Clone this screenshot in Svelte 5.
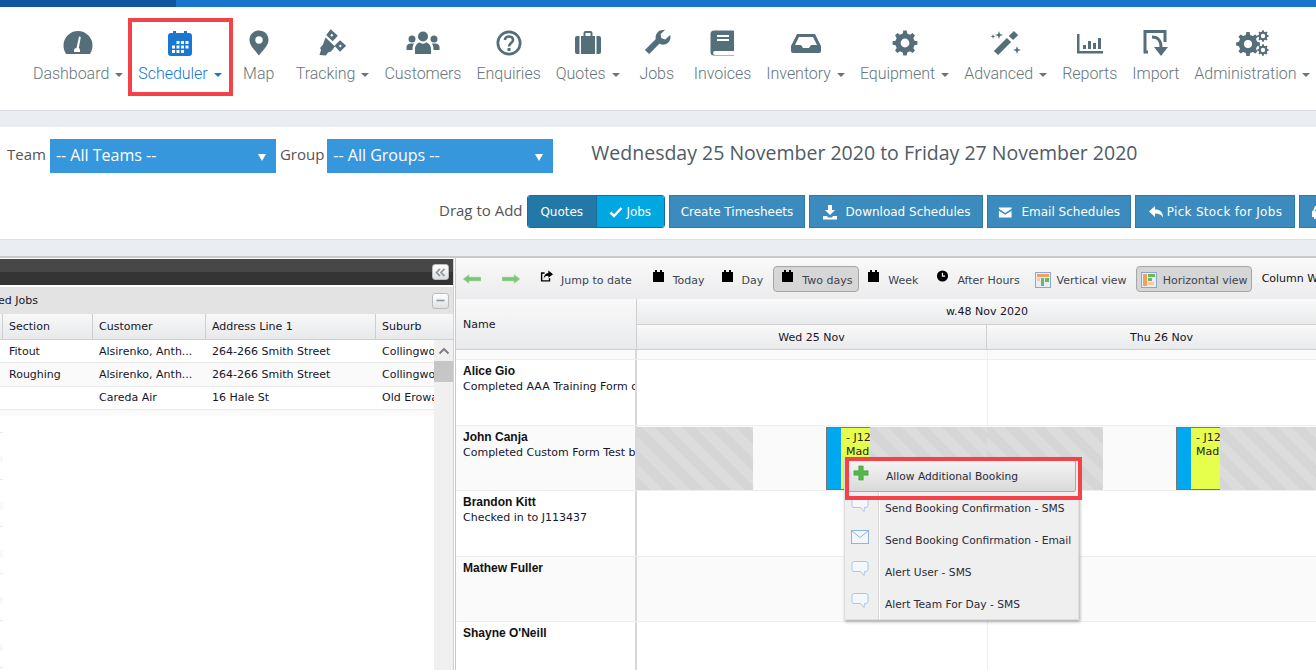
<script>
  // gear outline as one path, with a round hole in the middle
  function gear(cx, cy, r, hole, teeth = 8) {
    let d = '';
    const step = (Math.PI * 2) / teeth;
    for (let i = 0; i < teeth; i++) {
      const a = i * step - Math.PI / 2;
      const pts = [
        [r * 0.78, a - step * 0.3],
        [r, a - step * 0.17],
        [r, a + step * 0.17],
        [r * 0.78, a + step * 0.3]
      ];
      for (const [rad, t] of pts) {
        d += `${d ? 'L' : 'M'}${(cx + rad * Math.cos(t)).toFixed(2)} ${(cy + rad * Math.sin(t)).toFixed(2)}`;
      }
    }
    d += `zM${cx - hole} ${cy}a${hole} ${hole} 0 1 0 ${hole * 2} 0a${hole} ${hole} 0 1 0 ${-hole * 2} 0z`;
    return d;
  }

  const icons = {
    dashboard: {
      d: 'M17 1A14.5 14.5 0 0 0 2.5 15.5c0 3 1 6 2.5 8.5h24c1.500-2.500 2.500-5.500 2.500-8.500A14.500 14.500 0 0 0 17 1zM15.500 18l2.500-11.500 1.800.4-2 11.100c.8.500 1.200 1.100 1.200 2V22h-6v-2c0-1 1-2 2.500-2z'
    },
    calendar: {
      d: 'M8 3h2V1h3v2h8V1h3v2h2a3 3 0 0 1 3 3v17a3 3 0 0 1-3 3H8a3 3 0 0 1-3-3V6a3 3 0 0 1 3-3zM13.500 11h3v3h-3zM18 11h3v3h-3zM22.500 11h3v3h-3zM9 15.500h3v3H9zM13.500 15.500h3v3h-3zM18 15.500h3v3h-3zM22.500 15.500h3v3h-3zM9 20h3v3H9zM13.500 20h3v3h-3zM18 20h3v3h-3z'
    },
    marker: {
      d: 'M17 .5C11.500.5 7.500 4.500 7.500 10c0 6 6.500 11 9.500 15.500 3-4.500 9.500-9.500 9.500-15.500 0-5.500-4-9.500-9.500-9.500zM17 6.300a3.700 3.700 0 1 1 0 7.400 3.700 3.700 0 0 1 0-7.400z'
    },
    satellite: {
      d: 'M14.700-.8l7.100 6.500-5.100 5.500-6.500-6.200zM15.800 3.800l-1.500 1.500 1.500 1.500 1.500-1.500zM24 10.200l6.200 5.500-6.200 6.100-5.500-6.100zM24.300 14.500l-1.500 1.500 1.500 1.500 1.500-1.500zM9.500 7.500l9.500 9-4 5-3 1-2 3-6.500-.5 1.500-5-1-2 3-3.500z'
    },
    users: {
      d: 'M17 1.500a5 5 0 1 1 0 10 5 5 0 0 1 0-10zM6 5.500a3.500 3.500 0 1 1 0 7 3.500 3.500 0 0 1 0-7zM28 5.500a3.500 3.500 0 1 1 0 7 3.500 3.500 0 0 1 0-7zM9 24v-5c0-4 3-6.500 5-6.500 1 .8 2 1.200 3 1.200s2-.4 3-1.200c2 0 5 2.500 5 6.500v5zM.5 20v-3c0-2 2-3.500 4-3.500h3.500c-1 1.500-1.500 3-1.500 6.500zM33.500 20v-3c0-2-2-3.500-4-3.500H26c1 1.500 1.500 3 1.500 6.500zM0 0z'
    },
    question: {
      d: 'M17 .5a12.500 12.500 0 1 1 0 25 12.500 12.500 0 0 1 0-25zM17 3.200a9.800 9.800 0 1 0 0 19.600 9.800 9.800 0 0 0 0-19.600zM15.500 18h3v3h-3z',
      s: 'M13 10c0-2.500 2-3.500 4-3.500s4 1.200 4 3.500c0 3-4 3-4 6.500',
      w: 2.6
    },
    suitcase: {
      d: 'M6 6h2.500v18H6a2 2 0 0 1-2-2V8a2 2 0 0 1 2-2zM10 6h2.500V3a2 2 0 0 1 2-2h5a2 2 0 0 1 2 2v3H24v18H10zM14.500 3v3h5V3zM25.500 6H28a2 2 0 0 1 2 2v14a2 2 0 0 1-2 2h-2.500z'
    },
    wrench: {
      d: 'M23 0a7.500 7.500 0 0 0-7 10l4 4a7.500 7.500 0 0 0 10.500-7.500l-.3-1.500-5 4.500-4-1.500-.5-4 4.500-4.300z',
      s: 'M7 22L19 10',
      w: 6
    },
    book: {
      d: 'M8 .5h19a1 1 0 0 1 1 1V21H9a2 2 0 0 0 0 4h19v.5H8a3.500 3.500 0 0 1-3.500-3.500V4A3.500 3.500 0 0 1 8 .5zM11 5h12v2H11zM11 9h12v2H11z'
    },
    inbox: {
      d: 'M8 4h18l6 12v5a2 2 0 0 1-2 2H4a2 2 0 0 1-2-2v-5zM10 7l-4 8h6l2 3h6l2-3h6l-4-8z'
    },
    cog: { d: gear(17, 13, 12.5, 4.4) },
    wand: {
      d: 'M10 1l1 3 3 1-3 1-1 3-1-3-3-1 3-1zM4 4l.6 1.800 1.800.6-1.800.6L4 9l-.6-2-1.800-.6 1.800-.6zM28 16l1 3 3 1-3 1-1 3-1-3-3-1 3-1z',
      s: 'M7 23L20 10M22 8l5-5',
      w: 6
    },
    chart: {
      d: 'M4 4h2.500v17H30v2.500H4zM10 15h3v4h-3zM15 11h3v8h-3zM20 13h3v6h-3zM25 8h3v11h-3z'
    },
    importer: {
      d: 'M15 17h14l-7 9z',
      s: 'M9 22H6V1.500h20V12M13 7c7 0 9 4 9 11',
      w: 3
    },
    cogs: { d: gear(13, 14, 12, 4) + gear(28, 6, 5.7, 2.2) + gear(28, 20, 5.7, 2.2) }
  };

  const navItems = [
    { label: 'Dashboard', icon: 'dashboard', caret: true },
    { label: 'Scheduler', icon: 'calendar', caret: true, active: true },
    { label: 'Map', icon: 'marker' },
    { label: 'Tracking', icon: 'satellite', caret: true },
    { label: 'Customers', icon: 'users' },
    { label: 'Enquiries', icon: 'question' },
    { label: 'Quotes', icon: 'suitcase', caret: true },
    { label: 'Jobs', icon: 'wrench' },
    { label: 'Invoices', icon: 'book' },
    { label: 'Inventory', icon: 'inbox', caret: true },
    { label: 'Equipment', icon: 'cog', caret: true },
    { label: 'Advanced', icon: 'wand', caret: true },
    { label: 'Reports', icon: 'chart' },
    { label: 'Import', icon: 'importer' },
    { label: 'Administration', icon: 'cogs', caret: true }
  ];

  const jobs = [
    { section: 'Fitout', customer: 'Alsirenko, Anth...', address: '264-266 Smith Street', suburb: 'Collingwood' },
    { section: 'Roughing', customer: 'Alsirenko, Anth...', address: '264-266 Smith Street', suburb: 'Collingwood' },
    { section: '', customer: 'Careda Air', address: '16 Hale St', suburb: 'Old Erowal Bay' }
  ];

  const people = [
    { name: 'Alice Gio', note: 'Completed AAA Training Form on' },
    { name: 'John Canja', note: 'Completed Custom Form Test by', booked: true },
    { name: 'Brandon Kitt', note: 'Checked in to J113437' },
    { name: 'Mathew Fuller', note: '' },
    { name: "Shayne O'Neill", note: '' }
  ];

  const menu = [
    { label: 'Allow Additional Booking', icon: 'plus', active: true },
    { label: 'Send Booking Confirmation - SMS', icon: 'bubble' },
    { label: 'Send Booking Confirmation - Email', icon: 'mail' },
    { label: 'Alert User - SMS', icon: 'bubble' },
    { label: 'Alert Team For Day - SMS', icon: 'bubble' }
  ];
</script>

{#snippet cal()}
  <svg class="tool-icon" viewBox="0 0 13 14"><path d="M1 3h2V1h2v2h3V1h2v2h2v10H1z" /></svg>
{/snippet}

{#snippet booking()}
  <div class="booking">
    <div class="booking-side"></div>
    <div class="booking-text">- J1234<br />Madison</div>
  </div>
{/snippet}

<div class="page">
  <div class="topbar"><div class="topbar-dark"></div></div>

  <nav class="nav">
    {#each navItems as item}
      <div class="nav-item" class:active={item.active}>
        <svg class="nav-icon" viewBox="0 0 34 26">
          <path d={icons[item.icon].d} fill-rule="evenodd" />
          {#if icons[item.icon].s}
            <path class="nav-stroke" d={icons[item.icon].s} stroke-width={icons[item.icon].w} />
          {/if}
        </svg>
        <span class="nav-label">{item.label}{#if item.caret}<i class="caret"></i>{/if}</span>
      </div>
    {/each}
  </nav>

  <section class="filters">
    <div class="filter-row">
      <span class="filter-label">Team</span>
      <div class="select team">-- All Teams --<i class="select-arrow"></i></div>
      <span class="filter-label">Group</span>
      <div class="select group">-- All Groups --<i class="select-arrow"></i></div>
      <h1 class="range">Wednesday 25 November 2020 to Friday 27 November 2020</h1>
    </div>
    <div class="action-row">
      <span class="filter-label drag">Drag to Add</span>
      <div class="toggle">
        <span class="toggle-off">Quotes</span>
        <span class="toggle-on">
          <svg class="btn-icon check" viewBox="0 0 14 14"><path d="M1.500 7.500l3.500 3.500 7.500-8" /></svg>Jobs
        </span>
      </div>
      <button class="btn create">Create Timesheets</button>
      <button class="btn download">
        <svg class="btn-icon solid" viewBox="0 0 16 16"><path d="M6 1h4v5h3l-5 5-5-5h3zM1 12h4l1 1.500h4l1-1.500h4v3.500H1z" /></svg>Download Schedules
      </button>
      <button class="btn email">
        <svg class="btn-icon solid" viewBox="0 0 16 16"><path d="M1 3h14v1.500L8 9 1 4.500zM1 6.500L8 11l7-4.500V14H1z" /></svg>Email Schedules
      </button>
      <button class="btn pick">
        <svg class="btn-icon solid" viewBox="0 0 16 16"><path d="M7 2v3.500c5 0 8 2.500 8 8-1.500-3-4-4-8-4V13L1 7.500z" /></svg>Pick Stock for Jobs
      </button>
      <button class="btn">
        <svg class="btn-icon solid" viewBox="0 0 16 16"><path d="M3 7l2-5h6l2 5h1v6h-2v2h-2v-2H6v2H4v-2H2V7zM5 7h6L9.800 4H6.200z" fill-rule="evenodd" /></svg>Unpick
      </button>
    </div>
  </section>

  <main class="workspace">
    <aside class="jobs">
      <div class="jobs-head">
        <button class="mini-btn" aria-label="Collapse">
          <svg viewBox="0 0 12 10"><path d="M5.500 1L1.500 5l4 4M10.500 1l-4 4 4 4" /></svg>
        </button>
      </div>
      <div class="jobs-title">
        <span class="jobs-title-text"><span>Unscheduled Jobs</span></span>
        <button class="mini-btn" aria-label="Minimise">
          <svg viewBox="0 0 12 10"><path d="M1.500 5h9" /></svg>
        </button>
      </div>
      <div class="grid-row grid-head">
        <span>Section</span><span>Customer</span><span>Address Line 1</span><span>Suburb</span>
      </div>
      <div class="grid-body">
        <div class="grid-rows">
          {#each jobs as job, i}
            <div class="grid-row" class:alt={i % 2 === 1}>
              <span>{job.section}</span><span>{job.customer}</span><span>{job.address}</span><span>{job.suburb}</span>
            </div>
          {/each}
          <div class="grid-band"></div>
          <div class="row-stubs"></div>
        </div>
        <div class="scrollbar">
          <svg viewBox="0 0 12 8"><path d="M1.500 6.500L6 2l4.500 4.500" /></svg>
          <div class="scroll-thumb"></div>
        </div>
      </div>
    </aside>

    <section class="schedule">
      <div class="tools">
        <svg class="arrow" viewBox="0 0 18 10"><path d="M0 5l6-4.500V3h12v4H6v2.500z" /></svg>
        <svg class="arrow arrow-right" viewBox="0 0 18 10"><path d="M18 5l-6-4.500V3H0v4h12v2.500z" /></svg>
        <span class="tool jump">
          <svg class="tool-icon" viewBox="0 0 14 14"><path d="M9 1l5 4-5 4V6.800C6.500 6.800 5 7.500 4 10c0-4 2-6 5-6.300zM1 3h4v1.500H2.500v7h7V9.500H11V13H1z" /></svg>Jump to date
        </span>
        <span class="tool today">{@render cal()}Today</span>
        <span class="tool day">{@render cal()}Day</span>
        <span class="tool pressed two">{@render cal()}Two days</span>
        <span class="tool week">{@render cal()}Week</span>
        <span class="tool after">
          <svg class="tool-icon" viewBox="0 0 14 14"><path fill-rule="evenodd" d="M7 1a6 6 0 1 1 0 12A6 6 0 0 1 7 1zM6.300 3.500v4.200h3.500V6.500H7.600V3.500z" /></svg>After Hours
        </span>
        <span class="tool vertical">
          <svg class="view-icon" viewBox="0 0 16 16"><rect x=".5" y=".5" width="15" height="15" fill="#e8eef6" stroke="#8aa8d0" /><rect x="2" y="2" width="12" height="3" fill="#f0a060" /><rect x="2" y="6" width="3" height="3" fill="#f6c9a0" /><rect x="6" y="6" width="3" height="8" fill="#6cb860" /><rect x="10" y="6" width="4" height="4" fill="#6cb860" /></svg>Vertical view
        </span>
        <span class="tool pressed horizontal">
          <svg class="view-icon" viewBox="0 0 16 16"><rect x=".5" y=".5" width="15" height="15" fill="#e8eef6" stroke="#8aa8d0" /><rect x="2" y="2" width="4" height="12" fill="#f0a060" /><rect x="7" y="2" width="7" height="3" fill="#6cb860" /><rect x="7" y="6" width="4" height="3" fill="#6cb860" /><rect x="7" y="10" width="6" height="3" fill="#f6c9a0" /></svg>Horizontal view
        </span>
        <span class="tool column">Column Width</span>
      </div>

      <div class="sched-head">
        <div class="name-head">Name</div>
        <div class="time-head">
          <div class="week-row"><span class="week-label">w.48 Nov 2020</span></div>
          <div class="day-row">
            <div class="day-cell">Wed 25 Nov</div>
            <div class="day-cell">Thu 26 Nov</div>
            <div class="day-cell"></div>
          </div>
        </div>
      </div>

      <div class="band"><div class="name-col"></div><div class="day-col"></div><div class="day-col"></div></div>

      {#each people as person, i}
        <div class="person" class:alt={i % 2 === 1}>
          <div class="name-col">
            <strong>{person.name}</strong>
            <span class="note">{person.note}</span>
          </div>
          {#if person.booked}
            <div class="lane">
              <div class="hatch left-hatch"></div>
              <div class="gap"></div>
              {@render booking()}
              <div class="hatch right-hatch"></div>
              <div class="hatch left-hatch"></div>
              <div class="gap"></div>
              {@render booking()}
              <div class="hatch rest-hatch"></div>
            </div>
          {:else}
            <div class="day-col"></div>
            <div class="day-col"></div>
          {/if}
        </div>
      {/each}

      <div class="context-menu">
        {#each menu as entry}
          <div class="menu-item" class:active={entry.active}>
            <span class="menu-icon">
              {#if entry.icon === 'plus'}
                <svg viewBox="0 0 18 18"><path d="M6.500 1h5v5.500H17v5h-5.500V17h-5v-5.500H1v-5h5.500z" fill="#55b84a" stroke="#3d9636" stroke-width=".6" /></svg>
              {:else if entry.icon === 'mail'}
                <svg viewBox="0 0 18 14"><rect x=".5" y=".5" width="17" height="13" fill="#f2f6fb" stroke="#8fb4e0" /><path d="M1 1l8 6.500L17 1" fill="none" stroke="#8fb4e0" /></svg>
              {:else}
                <svg viewBox="0 0 18 16"><path d="M3 .5h12a2 2 0 0 1 2 2v6a2 2 0 0 1-2 2h-1.500l-.5 4-3.500-4H3a2 2 0 0 1-2-2v-6a2 2 0 0 1 2-2z" fill="#f4f8fd" stroke="#a9c7ea" /></svg>
              {/if}
            </span>
            <span class="menu-text">{entry.label}</span>
          </div>
        {/each}
      </div>
      <div class="callout"></div>
    </section>
  </main>
</div>

<style>
  :global(html), :global(body) {
    margin: 0;
    overflow: hidden;
  }

  .page {
    position: relative;
    width: 1316px;
    height: 670px;
    overflow: hidden;
    background: #eaedf2;
    font-family: Roboto, sans-serif;
  }

  .topbar {
    height: 7px;
    background: #1c75cc;
  }

  .topbar-dark {
    width: 176px;
    height: 7px;
    background: #0f56a0;
  }

  .nav {
    display: flex;
    gap: 15px;
    box-sizing: border-box;
    height: 104px;
    padding: 23px 0 0 33px;
    background: #fff;
    border-bottom: 1px solid #dcdfe3;
  }

  .nav-item {
    position: relative;
    display: flex;
    flex-direction: column;
    align-items: center;
    flex: none;
    min-width: 44px;
    color: #67757c;
  }

  .nav-item.active {
    color: #1976d2;
  }

  .nav-item.active::after {
    content: '';
    position: absolute;
    left: -10px;
    top: -12px;
    height: 78px;
    box-sizing: border-box;
    width: 105px;
    border: 4px solid #f44248;
  }

  .nav-icon {
    display: block;
    width: 34px;
    height: 26px;
    overflow: visible;
    fill: #546e7a;
  }

  .active .nav-icon {
    fill: #1976d2;
  }

  .nav-stroke {
    fill: none;
    stroke: #546e7a;
  }

  .nav-label {
    margin-top: 8px;
    font-size: 16px;
    line-height: 20px;
    font-weight: 300;
    letter-spacing: -.03px;
    white-space: nowrap;
  }

  .caret {
    display: inline-block;
    margin-left: 6px;
    vertical-align: 2px;
    border-top: 4px solid currentColor;
    border-left: 4px solid transparent;
    border-right: 4px solid transparent;
  }

  .filters {
    box-sizing: border-box;
    height: 113px;
    margin-top: 16px;
    padding: 12px 0 0 7px;
    background: #fff;
    border-bottom: 1px solid #dcdfe3;
    overflow: hidden;
  }

  .filter-row {
    display: flex;
    align-items: center;
    gap: 4px;
    height: 34px;
  }

  .filter-label {
    font-size: 15px;
    color: #555;
    font-family: "Open Sans", sans-serif;
    transform: translateY(-2px);
    white-space: nowrap;
  }

  .select {
    position: relative;
    box-sizing: border-box;
    width: 226px;
    height: 34px;
    padding: 0 6px;
    line-height: 33px;
    background: #3697dc;
    color: #fff;
    font-family: "Open Sans", sans-serif;
    font-size: 16px;
  }

  .group {
    margin-left: -1px;
  }

  .select-arrow {
    position: absolute;
    right: 10px;
    top: 15px;
    border-top: 7px solid #fff;
    border-left: 4.500px solid transparent;
    border-right: 4.500px solid transparent;
  }

  .range {
    margin: 0 0 7px 34px;
    font-size: 19.500px;
    font-weight: 400;
    color: #4f5b66;
    font-family: "Open Sans", sans-serif;
    white-space: nowrap;
  }

  .action-row {
    display: flex;
    align-items: center;
    gap: 4px;
    height: 33px;
    margin-top: 22px;
    padding-left: 432px;
    font-family: Tahoma, "DejaVu Sans", sans-serif;
    font-size: 12px;
  }

  .drag {
    width: 84px;
    flex: none;
  }

  .toggle {
    display: flex;
    box-sizing: border-box;
    flex: none;
    width: 138px;
    height: 33px;
    border: 1px solid #1a6d99;
    border-radius: 3px;
    overflow: hidden;
    color: #fff;
  }

  .toggle-off, .toggle-on {
    display: flex;
    align-items: center;
    justify-content: center;
    flex: 1;
  }

  .toggle-off {
    background: #2279a8;
    border-right: 1px solid #1a6d99;
  }

  .toggle-on {
    background: #00a7e1;
    gap: 3px;
  }

  .btn {
    display: flex;
    align-items: center;
    justify-content: center;
    gap: 9px;
    flex: none;
    box-sizing: border-box;
    height: 33px;
    padding: 0 10px;
    background: #3b8bbe;
    border: 1px solid #2f7aa9;
    color: #fff;
    font: inherit;
    white-space: nowrap;
  }

  .create { width: 136px; }
  .download { width: 174px; gap: 8px; }
  .email { width: 144px; }
  .pick { width: 160px; gap: 3px; letter-spacing: .3px; }

  .btn-icon {
    width: 16px;
    height: 16px;
  }

  .btn-icon.solid {
    fill: #fff;
  }

  .btn-icon.check {
    width: 14px;
    height: 14px;
    fill: none;
    stroke: #fff;
    stroke-width: 2.500;
  }

  .workspace {
    display: flex;
    margin-top: 16px;
    height: 414px;
    gap: 1px;
    background: #fff;
    border-top: 2px solid #c9c9c9;
    box-sizing: border-box;
    font-family: Tahoma, "DejaVu Sans", sans-serif;
    font-size: 11px;
    color: #15152b;
  }

  .jobs {
    box-sizing: border-box;
    flex: none;
    width: 454px;
    padding-top: 1px;
    background: #fff;
    border-right: 1px solid #c3d3e8;
  }

  .jobs-head {
    display: flex;
    align-items: center;
    justify-content: flex-end;
    box-sizing: border-box;
    height: 26px;
    margin-bottom: 2px;
    padding-right: 4px;
    background: linear-gradient(#474747 0 50%, #343434 50%);
  }

  .jobs-title {
    display: flex;
    align-items: center;
    justify-content: space-between;
    height: 27px;
    padding-right: 4px;
    background: #e3e3e3;
  }

  .jobs-title-text {
    display: flex;
    justify-content: flex-end;
    width: 38px;
    overflow: hidden;
    white-space: nowrap;
  }

  .mini-btn {
    display: flex;
    align-items: center;
    justify-content: center;
    width: 17px;
    height: 16px;
    padding: 0;
    border: 1px solid #bbb;
    border-radius: 3px;
    background: linear-gradient(#fff, #e0e0e0);
  }

  .mini-btn svg {
    width: 11px;
    height: 9px;
    fill: none;
    stroke: #8b96a3;
    stroke-width: 1.800;
  }

  .grid-row {
    display: grid;
    grid-template-columns: 90px 113px 170px 1fr;
    align-items: center;
    box-sizing: border-box;
    height: 23.300px;
    padding-left: 2px;
    border-bottom: 1px solid #e9e9e9;
    background: #fff;
    overflow: hidden;
  }

  .grid-row.alt {
    background: #fafafa;
  }

  .grid-row span {
    padding-left: 7px;
    white-space: nowrap;
    overflow: hidden;
  }

  .grid-head {
    height: 26px;
    background: linear-gradient(#f8f8f8, #e8e9eb);
    border-bottom: 1px solid #cfcfcf;
  }

  .grid-head span {
    height: 25px;
    padding-left: 6px;
    line-height: 25px;
    border-left: 1px solid #cfcfcf;
  }

  .grid-body {
    display: flex;
    height: 330px;
  }

  .grid-rows {
    flex: none;
    width: 434px;
  }

  .grid-band {
    height: 6px;
    background: #fafafa;
  }

  .row-stubs {
    width: 3px;
    height: 254px;
    background: repeating-linear-gradient(#fff 0 16px, #ececec 16px 17px, #fff 17px 40px, #f9f9f9 40px 63px, #ececec 63px 64px);
    background-size: 3px 47px;
  }

  .scrollbar {
    flex: 1;
    background: #f0f0f0;
  }

  .scrollbar svg {
    display: block;
    width: 12px;
    height: 8px;
    margin: 7px auto 6px;
    fill: none;
    stroke: #7a7a7a;
    stroke-width: 1.800;
  }

  .scroll-thumb {
    height: 21px;
    background: #c6c6c6;
  }

  .schedule {
    position: relative;
    flex: 1;
    min-width: 0;
    border-left: 1px solid #c9c9c9;
    overflow: hidden;
  }

  .tools {
    display: flex;
    align-items: center;
    box-sizing: border-box;
    height: 41px;
    background: linear-gradient(#f9f9f9, #ececee);
    white-space: nowrap;
    color: #3c4450;
  }

  .arrow {
    width: 18px;
    height: 10px;
    flex: none;
    margin-left: 7px;
    fill: #7cc576;
    stroke: #b9e0b5;
    stroke-width: .6;
  }

  .arrow-right {
    margin-left: 21px;
  }

  .tool {
    display: flex;
    align-items: center;
    flex: none;
    box-sizing: border-box;
    height: 26px;
    gap: 8px;
    padding-top: 4px;
  }

  .tool-icon {
    width: 13px;
    height: 14px;
    fill: #000;
    transform: translateY(-5px);
  }

  .view-icon {
    width: 16px;
    height: 16px;
    margin-top: -2px;
  }

  .pressed {
    padding-left: 7px;
    border: 1px solid #a6a6a6;
    border-radius: 4px;
    background: #d6d6d6;
  }

  .jump { margin-left: 20px; }
  .today { margin-left: 20px; }
  .day { margin-left: 16px; }
  .two { margin-left: 10px; width: 86px; }
  .week { margin-left: 8px; }
  .after { margin-left: 18px; }
  .vertical { margin-left: 15px; gap: 6px; }
  .horizontal { margin-left: 9px; width: 116px; gap: 6px; padding-left: 4px; }
  .column { margin-left: 10px; padding-top: 0; color: #111; }

  .sched-head {
    display: flex;
    height: 51px;
  }

  .name-head {
    display: flex;
    align-items: center;
    box-sizing: border-box;
    flex: none;
    width: 181px;
    padding-left: 7px;
    background: linear-gradient(#f9f9f9, #e9eaec);
    border-right: 1px solid #cfcfcf;
    border-bottom: 1px solid #cfcfcf;
  }

  .time-head {
    flex: 1;
  }

  .week-row, .day-cell {
    display: flex;
    align-items: center;
    box-sizing: border-box;
    background: linear-gradient(#f9f9f9, #e9eaec);
    border-bottom: 1px solid #cfcfcf;
  }

  .week-row {
    height: 26px;
    width: 100%;
  }

  .week-label {
    width: 700px;
    text-align: center;
  }

  .day-row {
    display: flex;
    height: 25px;
  }

  .day-cell {
    justify-content: center;
    flex: none;
    width: 350px;
    border-right: 1px solid #cfcfcf;
  }

  .band {
    display: flex;
    box-sizing: border-box;
    height: 10px;
    background: #fafafa;
    border-bottom: 1px solid #eee;
  }

  .person {
    display: flex;
    box-sizing: border-box;
    height: 65.500px;
    background: #fff;
    border-bottom: 1px solid #eee;
  }

  .person.alt {
    background: #fafafa;
  }

  .name-col {
    display: flex;
    flex-direction: column;
    box-sizing: border-box;
    flex: none;
    width: 181px;
    padding: 4px 0 0 7px;
    border-right: 2px solid #d8d8d8;
    overflow: hidden;
    white-space: nowrap;
  }

  .name-col strong {
    font-family: "Liberation Sans", sans-serif;
    font-size: 12px;
    line-height: 15px;
    color: #111;
  }

  .note {
    margin-top: 1px;
    line-height: 14px;
    color: #15152b;
  }

  .day-col {
    flex: none;
    width: 350px;
    border-right: 1px solid #eee;
  }

  .lane {
    display: flex;
    flex: none;
    padding-top: 1px;
    box-sizing: border-box;
  }

  .hatch {
    flex: none;
    background: repeating-linear-gradient(45deg, #d6d6d6 0 9.500px, #dcdcdc 9.500px 19px);
  }

  .left-hatch { width: 116px; }
  .gap { width: 73px; flex: none; }
  .right-hatch { width: 117px; }
  .rest-hatch { width: 100px; }

  .booking {
    display: flex;
    flex: none;
    box-sizing: border-box;
    width: 44px;
    height: 63px;
    border: 1px solid #767676;
    border-right: none;
    overflow: hidden;
  }

  .booking-side {
    flex: none;
    width: 14px;
    background: #00a8f0;
  }

  .booking-text {
    flex: 1;
    padding: 3px 0 0 5px;
    background: #e6ff4c;
    line-height: 14px;
    color: #222;
    white-space: nowrap;
    overflow: hidden;
  }

  .context-menu {
    position: absolute;
    left: 388px;
    top: 199px;
    box-sizing: border-box;
    width: 235px;
    height: 163px;
    padding: 2px;
    font-size: 10.700px;
    background: linear-gradient(90deg, #efefef 0 33px, #d6d6d6 33px 34px, #fff 34px 35px, #efefef 35px);
    border: 1px solid #dedede;
    box-shadow: 1px 2px 3px rgba(0, 0, 0, .3);
  }

  .menu-item {
    display: flex;
    align-items: center;
    box-sizing: border-box;
    height: 32px;
    color: #2b2b3a;
    white-space: nowrap;
  }

  .menu-item.active {
    background: linear-gradient(#f5f5f5, #d9d9d9);
    border: 1px solid #a8a8a8;
    border-radius: 2px;
  }

  .menu-icon {
    display: flex;
    justify-content: center;
    flex: none;
    width: 26px;
    margin-right: 12px;
    transform: translateY(-3px);
  }

  .menu-icon svg {
    width: 18px;
    height: 16px;
  }

  .callout {
    position: absolute;
    left: 389px;
    top: 199px;
    box-sizing: border-box;
    width: 237px;
    height: 43px;
    border: 4px solid #f44248;
  }
</style>
